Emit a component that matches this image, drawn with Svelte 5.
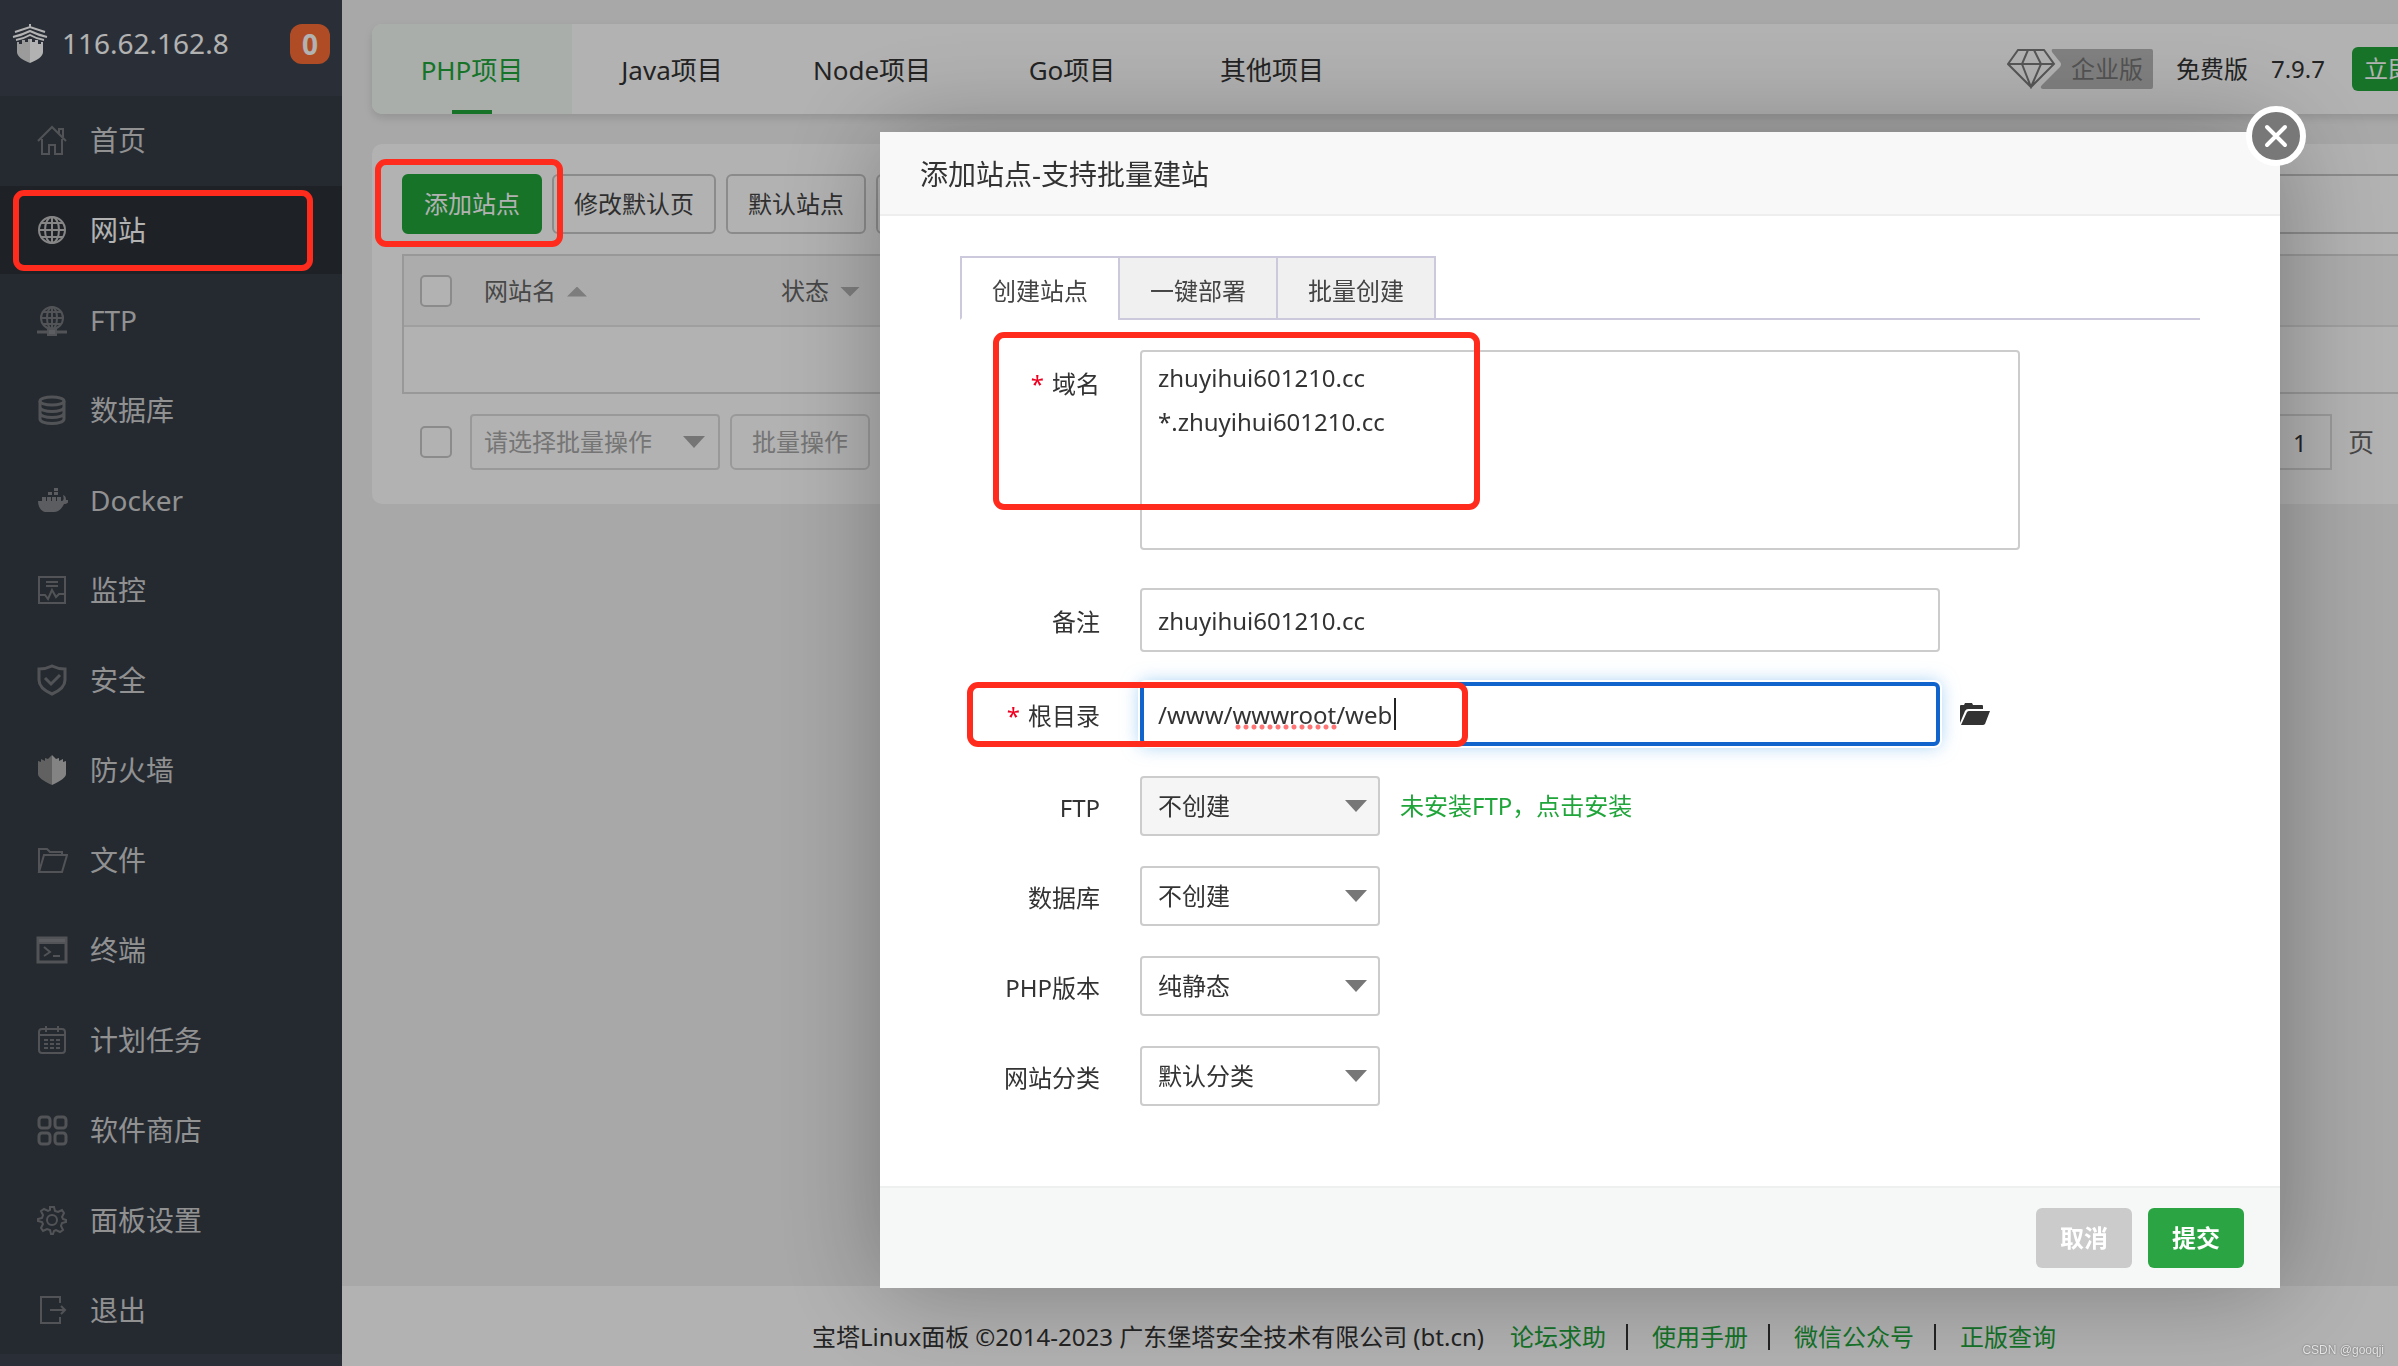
<script>
  const nav = [
    { id: 'home', label: '首页' },
    { id: 'site', label: '网站', active: true },
    { id: 'ftp', label: 'FTP' },
    { id: 'db', label: '数据库' },
    { id: 'docker', label: 'Docker' },
    { id: 'monitor', label: '监控' },
    { id: 'safe', label: '安全' },
    { id: 'firewall', label: '防火墙' },
    { id: 'files', label: '文件' },
    { id: 'term', label: '终端' },
    { id: 'cron', label: '计划任务' },
    { id: 'store', label: '软件商店' },
    { id: 'settings', label: '面板设置' },
    { id: 'logout', label: '退出' }
  ];
  const projects = ['PHP项目', 'Java项目', 'Node项目', 'Go项目', '其他项目'];
  const modalTabs = ['创建站点', '一键部署', '批量创建'];
  const links = ['论坛求助', '使用手册', '微信公众号', '正版查询'];
  const selects = [
    { id: 'ftp', label: 'FTP', value: '不创建', muted: true, hint: '未安装FTP，点击安装' },
    { id: 'database', label: '数据库', value: '不创建' },
    { id: 'php', label: 'PHP版本', value: '纯静态' },
    { id: 'category', label: '网站分类', value: '默认分类' }
  ];
  let domains = $state('zhuyihui601210.cc\n*.zhuyihui601210.cc');
  let remark = $state('zhuyihui601210.cc');
  let root = $state('/www/wwwroot/web');
</script>

<div class="shell">
  <aside class="sidebar">
    <div class="brand">
      <svg class="logo" viewBox="0 0 36 40" aria-hidden="true">
        <path d="M18 0v4M3 8 18 3l15 5M1 13q9-2 17-6 8 4 17 6M4 16q7-1 14-5 7 4 14 5" fill="none" stroke="#fff" stroke-width="2" />
        <path d="M5 18h2v2h3v-4h3v2h3v-3h2v24C10 36 5 32 5 28z" fill="#dedede" />
        <path d="M31 18h-2v2h-3v-4h-3v2h-3v-3h-2v24c8-3 13-7 13-11z" fill="#fff" />
      </svg>
      <span class="ip">116.62.162.8</span>
      <span class="badge">0</span>
    </div>
    <nav>
      {#each nav as item}
        <a href="#{item.id}" class="item" class:active={item.active}>
          <svg viewBox="0 0 32 32" aria-hidden="true">
            {#if item.id === 'home'}
              <path d="M2 17 16 3l14 14M23 9V5h4v8M6 15v15h7V21h6v9h7V15" />
            {:else if item.id === 'site'}
              <circle cx="16" cy="16" r="13" />
              <ellipse cx="16" cy="16" rx="7" ry="13" />
              <path d="M16 3v26M3 16h26M5 9h22M5 23h22" />
            {:else if item.id === 'ftp'}
              <circle cx="16" cy="14" r="11" />
              <ellipse cx="16" cy="14" rx="5" ry="11" />
              <path d="M16 3v26M5 14h22M7 8h18M7 20h18" />
              <path d="M1 28h30" stroke-width="3" />
              <path d="M12 25h8v6h-8z" class="fill" />
            {:else if item.id === 'db'}
              <g stroke-width="3">
                <ellipse cx="16" cy="7" rx="12" ry="4" />
                <path d="M4 7v18c0 6 24 6 24 0V7M4 13c0 6 24 6 24 0M4 19c0 6 24 6 24 0" />
              </g>
            {:else if item.id === 'docker'}
              <path class="fill" stroke="none" d="M2 17h4v-4h4v4h1v-4h4v4h1v-4h4v4h1v-4h4v4c3 0 3-3 2-6 3 1 3 3 3 5h3c0 3-3 4-5 4-3 6-6 8-10 8h-9c-4-1-7-5-7-11zM12 8h4v3h-4zM18 8h4v3h-4zM18 4h4v3h-4z" />
            {:else if item.id === 'monitor'}
              <path d="M3 3h26v26H3z" />
              <path d="M4 21h5l3 4 4-9 4 7 3-3h5M10 8h12M10 12h12" />
            {:else if item.id === 'safe'}
              <g stroke-width="3">
                <path d="M16 2c4 2 8 3 13 3v11c0 7-6 11-13 14C9 27 3 23 3 16V5c5 0 9-1 13-3z" />
                <path d="m9 14 6 6 9-9" />
              </g>
            {:else if item.id === 'firewall'}
              <path class="left" d="M2 7l3 1V5l4 2V4l3 1 4-4v30C7 27 2 23 2 20z" />
              <path class="right" d="M30 7l-3 1V5l-4 2V4l-3 1-4-4v30c9-4 14-8 14-11z" />
            {:else if item.id === 'files'}
              <path d="M3 28V5h8l3 3h12v3M3 28 8 11h23l-5 17z" />
            {:else if item.id === 'term'}
              <path d="M2 4h28v24H2z" stroke-width="3" />
              <path class="fill" d="M2 4h28v5H2z" />
              <path d="m8 13 6 5-6 4M17 22h7" />
            {:else if item.id === 'cron'}
              <rect x="3" y="5" width="26" height="24" rx="3" />
              <path d="M3 11h26M10 2v6M22 2v6" />
              <path d="M8 16h16M8 20h16M8 24h16" stroke-dasharray="4 2" />
            {:else if item.id === 'store'}
              <g stroke-width="3">
                <rect x="3" y="3" width="11" height="11" rx="3" />
                <rect x="19" y="3" width="11" height="11" rx="3" />
                <rect x="3" y="19" width="11" height="11" rx="3" />
                <rect x="19" y="19" width="11" height="11" rx="3" />
              </g>
            {:else if item.id === 'settings'}
              <path d="M14 3h4l1 4 3 1 4-2 2 3-2 4 1 2 3 1v2l-4 1-1 3 2 4-3 2-4-2-2 1-1 3h-2l-1-4-3-1-4 2-2-3 2-4-1-2-4-1v-2l4-1 1-3-2-4 3-2 4 2 2-1z" />
              <circle cx="16" cy="16" r="5" />
            {:else}
              <path d="M24 9V3H5v26h19v-6M14 16h15M25 12l4 4-4 4" />
            {/if}
          </svg>
          <span>{item.label}</span>
          {#if item.active}<i class="mark mark-nav"></i>{/if}
        </a>
      {/each}
    </nav>
  </aside>

  <main class="main">
    <header class="topbar">
      {#each projects as name, i}
        <button class="project" class:active={i === 0}>{name}</button>
      {/each}
      <div class="edition">
        <div class="enterprise">
          <svg viewBox="0 0 146 40" aria-hidden="true">
            <path d="M46 0h98q2 0 2 2v36q0 2-2 2H36q-4-1-1-4l18-18q2-3 0-5l-8-10q-1-3 1-3z" fill="#b8b8b8" />
            <path d="M11 1h26l10 14-23 23L1 15zM1 15h46M21 1l-6 14 9 23 10-23-7-14" fill="none" stroke="#7c7c7c" stroke-width="2" />
          </svg>
          <span>企业版</span>
        </div>
        <span>免费版</span>
        <span>7.9.7</span>
        <button class="update">立即更新</button>
      </div>
    </header>

    <section class="card">
      <div class="toolbar">
        <button class="btn primary">添加站点<i class="mark mark-add"></i></button>
        <button class="btn">修改默认页</button>
        <button class="btn">默认站点</button>
        <button class="btn cli" aria-label="PHP命令行版本"></button>
        <input class="search" type="search" aria-label="搜索站点" />
      </div>
      <div class="table-box">
        <table>
          <thead>
            <tr>
              <th class="check"><input type="checkbox" aria-label="全选" /></th>
              <th class="name">网站名<i class="sort up"></i></th>
              <th>状态<i class="sort"></i></th>
            </tr>
          </thead>
          <tbody><tr><td colspan="3"></td></tr></tbody>
        </table>
      </div>
      <div class="batch">
        <input type="checkbox" aria-label="选择批量" />
        <div class="select">
          <select aria-label="批量操作"><option>请选择批量操作</option></select>
        </div>
        <button class="btn">批量操作</button>
        <label class="pager"><input type="text" value="1" />页</label>
      </div>
    </section>

    <footer class="footer">
      <span>宝塔Linux面板 ©2014-2023 广东堡塔安全技术有限公司 (bt.cn)</span>
      {#each links as link, i}
        {#if i > 0}<i class="bar"></i>{/if}
        <a href="#{link}">{link}</a>
      {/each}
    </footer>
  </main>
</div>

<div class="overlay">
  <div class="modal" role="dialog" aria-labelledby="modal-title">
    <h2 id="modal-title">添加站点-支持批量建站</h2>
    <button class="close" aria-label="关闭">
      <svg viewBox="0 0 24 24" aria-hidden="true"><path d="m3 3 18 18M21 3 3 21" /></svg>
    </button>
    <div class="body">
      <div class="tabs">
        {#each modalTabs as tab, i}
          <button class="tab" class:active={i === 0}>{tab}</button>
        {/each}
      </div>
      <div class="row domain">
        <label for="domain"><b>*</b>域名</label>
        <textarea id="domain" bind:value={domains} spellcheck="false"></textarea>
        <i class="mark mark-domain"></i>
      </div>
      <div class="row">
        <label for="remark">备注</label>
        <input id="remark" class="text" type="text" bind:value={remark} spellcheck="false" />
      </div>
      <div class="row">
        <label for="root"><b>*</b>根目录</label>
        <div class="focus">
          <input id="root" class="text" type="text" bind:value={root} spellcheck="false" />
          <i class="squiggle"></i>
          <i class="caret"></i>
        </div>
        <button class="folder" aria-label="选择目录">
          <svg viewBox="0 0 30 22" aria-hidden="true">
            <path d="M0 20V3q0-1 1-1h3l1-2h7l1 2h9q1 0 1 1v3H8q-2 0-3 2zM1 22l6-13q1-1 2-1h21l-5 13q-1 1-2 1z" fill="#333" />
          </svg>
        </button>
        <i class="mark mark-root"></i>
      </div>
      {#each selects as s}
        <div class="row">
          <label for={s.id}>{s.label}</label>
          <div class="select" class:muted={s.muted}>
            <select id={s.id}><option>{s.value}</option></select>
          </div>
          {#if s.hint}<a class="hint" href="#install">{s.hint}</a>{/if}
        </div>
      {/each}
    </div>
    <div class="actions">
      <button class="cancel">取消</button>
      <button class="submit">提交</button>
    </div>
  </div>
  <span class="watermark">CSDN @gooqji</span>
</div>

<style>
  :global(body) {
    background: #f1f1f1;
    overflow: hidden;
  }
  :global(#app) {
    font: 24px/36px 'Noto Sans', 'Noto Sans CJK SC', sans-serif;
    color: #333;
  }
  * {
    box-sizing: border-box;
  }
  button,
  input,
  select,
  textarea {
    font: inherit;
    color: inherit;
    margin: 0;
  }
  button {
    white-space: nowrap;
    border: 0;
    padding: 0;
    background: none;
  }
  a {
    text-decoration: none;
  }
  .shell {
    display: flex;
    min-height: 100vh;
    overflow: hidden;
  }

  .sidebar {
    flex: none;
    width: 342px;
    background: #3d444f;
  }
  .brand {
    display: flex;
    align-items: center;
    height: 96px;
    padding: 0 12px 8px;
    font-size: 28px;
    color: #fff;
  }
  .logo {
    width: 36px;
    height: 40px;
    margin-right: 14px;
  }
  .ip {
    padding-bottom: 2px;
  }
  .badge {
    width: 40px;
    height: 40px;
    margin-left: auto;
    border-radius: 12px;
    background: #fc6e35;
    font-weight: bold;
    line-height: 40px;
    text-align: center;
  }
  nav {
    display: flex;
    flex-direction: column;
    gap: 2px;
    background: #363d47;
  }
  .item {
    position: relative;
    display: flex;
    align-items: center;
    gap: 22px;
    height: 88px;
    padding-left: 36px;
    font-size: 28px;
    color: #d0d0d2;
  }
  .item.active {
    background: #2c3138;
    color: #fff;
  }
  .item svg {
    width: 32px;
    height: 32px;
    fill: none;
    stroke: #75787b;
    stroke-width: 2;
  }
  .item.active svg {
    stroke: #c0c0c0;
  }
  .item .fill {
    fill: #84868a;
  }
  .item .left {
    fill: #8c8c8c;
    stroke: none;
  }
  .item .right {
    fill: #bcbcbc;
    stroke: none;
  }

  .main {
    flex: 1;
    display: flex;
    flex-direction: column;
    min-width: 0;
    margin-right: -128px;
  }
  .topbar {
    display: flex;
    height: 90px;
    margin: 24px 30px 30px;
    padding-right: 24px;
    border-radius: 10px;
    background: #fff;
    box-shadow: 0 4px 8px rgba(0, 0, 0, 0.12);
  }
  .project {
    position: relative;
    width: 200px;
    padding-top: 2px;
    font-size: 26px;
  }
  .project.active {
    border-radius: 10px 0 0 10px;
    background: #f2faf4;
    color: #20a53a;
  }
  .project.active::after {
    content: '';
    position: absolute;
    left: 80px;
    right: 80px;
    bottom: 0;
    height: 4px;
    background: #20a53a;
  }
  .edition {
    display: flex;
    align-items: center;
    margin-left: auto;
    gap: 23px;
  }
  .enterprise {
    display: grid;
    height: 40px;
  }
  .enterprise > * {
    grid-area: 1 / 1;
  }
  .enterprise svg {
    width: 146px;
    height: 40px;
  }
  .enterprise span {
    justify-self: end;
    padding-right: 10px;
    line-height: 40px;
    color: #777;
  }
  .update {
    width: 120px;
    height: 44px;
    margin-left: 4px;
    border-radius: 6px;
    background: #20a53a;
    color: #fff;
  }

  .card {
    margin: 0 30px;
    padding: 30px 30px 34px;
    border-radius: 10px;
    background: #fff;
  }
  .toolbar {
    display: flex;
    gap: 10px;
  }
  .btn {
    position: relative;
    height: 60px;
    padding: 0 20px;
    border: 2px solid #c8c8c8;
    border-radius: 6px;
    color: #444;
  }
  .btn.primary {
    border-color: #20a53a;
    background: #20a53a;
    color: #fff;
  }
  .btn.cli {
    width: 200px;
  }
  .search {
    width: 400px;
    margin-left: auto;
    border: 2px solid #c8c8c8;
    border-radius: 6px;
    background: none;
  }
  .table-box {
    margin-top: 20px;
    border: 2px solid #dadada;
  }
  table {
    width: 100%;
    border-collapse: collapse;
  }
  th {
    height: 70px;
    padding: 0 16px;
    border-bottom: 2px solid #e4e4e4;
    background: #f7f7f7;
    font-weight: normal;
    text-align: left;
    color: #666;
  }
  th.check {
    width: 64px;
    padding-right: 0;
  }
  th.name {
    width: 297px;
  }
  td {
    height: 66px;
    padding: 0;
  }
  input[type='checkbox'] {
    appearance: none;
    display: block;
    flex: none;
    width: 32px;
    height: 32px;
    border: 2px solid #c8c8c8;
    border-radius: 5px;
    background: #fff;
  }
  .sort {
    display: inline-block;
    width: 20px;
    height: 10px;
    margin: 0 0 3px 11px;
    background: #b4b4b4;
    clip-path: polygon(0 0, 100% 0, 50% 100%);
  }
  .sort.up {
    clip-path: polygon(0 100%, 100% 100%, 50% 0);
  }
  .batch {
    display: flex;
    align-items: center;
    gap: 10px;
    margin-top: 20px;
    padding-left: 18px;
    color: #a8a8a8;
  }
  .batch .select {
    width: 250px;
    height: 56px;
    margin-left: 8px;
    border-color: #dcdcdc;
  }
  .batch select {
    padding-left: 12px;
  }
  .batch .btn {
    height: 56px;
    border-color: #dcdcdc;
    color: #a8a8a8;
  }
  .pager {
    display: flex;
    align-items: center;
    gap: 16px;
    margin: 0 92px 0 auto;
    font-size: 26px;
    color: #666;
  }
  .pager input {
    width: 64px;
    height: 56px;
    padding: 0;
    border: 2px solid #dcdcdc;
    background: none;
    text-align: center;
    font-size: 24px;
    color: #333;
  }
  .footer {
    display: flex;
    align-items: center;
    justify-content: center;
    height: 80px;
    margin-top: auto;
    padding-top: 22px;
    background: #fff;
    white-space: nowrap;
  }
  .footer a {
    color: #20a53a;
  }
  .footer span {
    margin-right: 26px;
  }
  .bar {
    width: 2px;
    height: 26px;
    margin: 0 24px 0 20px;
    background: #333;
  }

  .overlay {
    position: fixed;
    inset: 0;
    z-index: 10;
    display: flex;
    justify-content: flex-end;
    align-items: flex-start;
    padding: 132px 118px 0 0;
    background: rgba(0, 0, 0, 0.3);
  }
  .modal {
    position: relative;
    width: 1400px;
    background: #fff;
    box-shadow: 2px 2px 100px rgba(0, 0, 0, 0.3);
  }
  h2 {
    margin: 0;
    padding: 2px 40px 0;
    border-bottom: 2px solid #eee;
    background: #f8f8f8;
    font-size: 28px;
    font-weight: normal;
    line-height: 80px;
  }
  .close {
    position: absolute;
    top: -26px;
    right: -26px;
    width: 60px;
    height: 60px;
    border: 6px solid #fff;
    border-radius: 50%;
    background: #787878;
    display: grid;
    place-items: center;
  }
  .close svg {
    width: 24px;
    height: 24px;
    fill: none;
    stroke: #fff;
    stroke-width: 4;
    stroke-linecap: round;
  }
  .body {
    padding: 40px 80px 50px;
  }
  .tabs {
    display: flex;
    height: 64px;
    margin-bottom: 30px;
    box-shadow: inset 0 -2px #ccc9dc;
  }
  .tab {
    width: 158px;
    border: 2px solid #ccc9dc;
    border-right: 0;
    background: #f0f0f0;
    color: #444;
    padding-top: 6px;
  }
  .tab:last-child {
    width: 160px;
    border-right: 2px solid #ccc9dc;
  }
  .tab.active {
    border-bottom-color: #fff;
    background: #fff;
  }
  .row {
    position: relative;
    display: flex;
    align-items: center;
    margin-bottom: 30px;
  }
  .row.domain {
    align-items: flex-start;
    margin-bottom: 38px;
  }
  .row label {
    width: 140px;
    margin-right: 40px;
    padding-top: 4px;
    text-align: right;
  }
  .row.domain label {
    padding-top: 16px;
  }
  label b {
    margin-right: 8px;
    font-weight: normal;
    color: #f00020;
  }
  textarea {
    width: 880px;
    height: 200px;
    padding: 4px 16px;
    border: 2px solid #ccc;
    border-radius: 4px;
    background: #fff;
    line-height: 44px;
    resize: none;
  }
  .text {
    width: 800px;
    height: 64px;
    padding: 0 16px;
    border: 2px solid #ccc;
    border-radius: 4px;
    background: #fff;
  }
  .focus {
    position: relative;
  }
  .focus .text {
    display: block;
    padding: 0 14px;
    border: 4px solid #1164cc;
    border-radius: 6px;
    box-shadow:
      0 0 0 2px #fff,
      0 0 18px rgba(80, 165, 235, 0.55);
  }
  .squiggle {
    position: absolute;
    left: 94px;
    top: 42px;
    width: 104px;
    height: 6px;
    background: radial-gradient(circle, #ff7474 2px, transparent 3px) 0 0 / 8px 6px;
  }
  .caret {
    position: absolute;
    left: 254px;
    top: 16px;
    width: 2px;
    height: 32px;
    background: #222;
  }
  .folder {
    width: 30px;
    height: 22px;
    margin-left: 20px;
  }
  .folder svg {
    display: block;
  }
  .select {
    position: relative;
    width: 240px;
    height: 60px;
    border: 2px solid #ccc;
    border-radius: 4px;
  }
  .select.muted {
    background: #f5f5f5;
  }
  .select::after {
    content: '';
    position: absolute;
    right: 11px;
    top: 50%;
    width: 22px;
    height: 12px;
    margin-top: -6px;
    background: #777;
    clip-path: polygon(0 0, 100% 0, 50% 100%);
    pointer-events: none;
  }
  .batch .select::after {
    right: 13px;
    background: #a8a8a8;
  }
  select {
    appearance: none;
    display: block;
    width: 100%;
    height: 100%;
    padding: 0 16px;
    border: 0;
    background: none;
  }
  .hint {
    margin-left: 20px;
    color: #20a53a;
  }
  .actions {
    display: flex;
    justify-content: flex-end;
    gap: 16px;
    padding: 20px 36px;
    border-top: 2px solid #eef0f0;
    background: #f6f8f8;
  }
  .actions button {
    width: 96px;
    height: 60px;
    border-radius: 6px;
    font-weight: bold;
    color: #fff;
  }
  .cancel {
    background: #cbcbcb;
  }
  .actions .submit {
    background: #2ba543;
  }

  .mark {
    position: absolute;
    z-index: 20;
    border: 6px solid #ff2b1c;
    border-radius: 11px;
    pointer-events: none;
  }
  .mark-nav {
    inset: 4px 29px 3px 13px;
  }
  .mark-add {
    inset: -17px -23px -15px -29px;
  }
  .mark-domain {
    left: 33px;
    top: -18px;
    width: 487px;
    height: 178px;
  }
  .mark-root {
    left: 7px;
    top: 0;
    width: 501px;
    height: 65px;
  }
  .watermark {
    position: absolute;
    right: 14px;
    bottom: 6px;
    font: 12px/20px 'Liberation Sans', sans-serif;
    color: #e4e4e4;
    text-shadow: 0 0 2px #555;
  }
</style>
